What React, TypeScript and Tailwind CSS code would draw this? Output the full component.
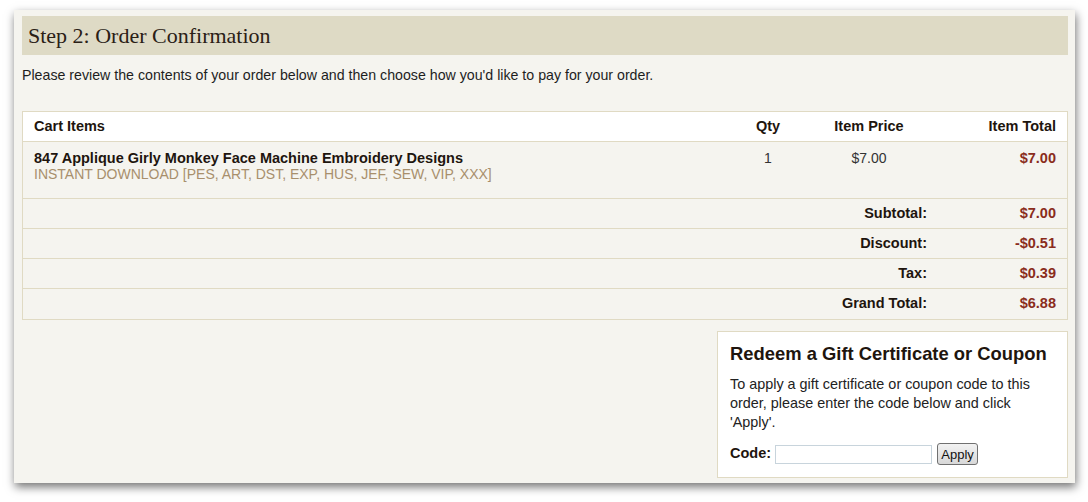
import React from "react";

const rows = [
  { label: "Subtotal:", value: "$7.00" },
  { label: "Discount:", value: "-$0.51" },
  { label: "Tax:", value: "$0.39" },
  { label: "Grand Total:", value: "$6.88" },
];

export default function App() {
  return (
    <div className="w-[1088px] h-[502px] bg-white pl-[14px] pt-[10px] overflow-hidden" style={{ fontFamily: '"Liberation Sans", Arial, sans-serif' }}>
      <div className="w-[1061px] h-[473px] bg-[#f5f4ef] shadow-[1px_4px_9px_rgba(0,0,0,0.55)] pt-[6px] pl-[8px] pr-[7px] text-[14px] text-[#222]">
        <div className="h-[39px] bg-[#dedac5] flex items-center pl-[6px]">
          <h1 className="text-[22px] text-[#2a2016] leading-none pt-[1px]" style={{ fontFamily: '"Liberation Serif", "Times New Roman", serif' }}>
            Step 2: Order Confirmation
          </h1>
        </div>
        <p className="mt-[12px] leading-[16px] text-[14.2px] text-[#1e1e1e]">
          Please review the contents of your order below and then choose how you'd like to pay for your order.
        </p>

        <div className="mt-[28px] border border-[#e0dac3]">
          <div className="h-[30px] bg-white flex items-center font-bold text-[14.5px] text-[#1e150e] border-b border-[#e0dac3]">
            <div className="w-[705px] pl-[11px]">Cart Items</div>
            <div className="w-[80px] text-center">Qty</div>
            <div className="w-[122px] text-center">Item Price</div>
            <div className="flex-1 text-right pr-[11px]">Item Total</div>
          </div>
          <div className="h-[57px] flex items-start pt-[8px] border-b border-[#e0dac3]">
            <div className="w-[705px] pl-[11px]">
              <div className="font-bold text-[14.5px] text-[#1e150e] leading-[16px]">847 Applique Girly Monkey Face Machine Embroidery Designs</div>
              <div className="text-[#a88f6c] leading-[16px]">INSTANT DOWNLOAD [PES, ART, DST, EXP, HUS, JEF, SEW, VIP, XXX]</div>
            </div>
            <div className="w-[80px] text-center leading-[16px] text-[#333]">1</div>
            <div className="w-[122px] text-center leading-[16px] text-[#333]">$7.00</div>
            <div className="flex-1 text-right pr-[11px] font-bold text-[14.5px] text-[#8a2c1c] leading-[16px]">$7.00</div>
          </div>
          {rows.map((r, i) => (
            <div key={r.label} className={`h-[30px] flex items-center font-bold text-[14.5px] ${i < rows.length - 1 ? "border-b border-[#e0dac3]" : ""}`}>
              <div className="w-[904px] text-right text-[#1e150e]">{r.label}</div>
              <div className="flex-1 text-right pr-[11px] text-[#8a2c1c]">{r.value}</div>
            </div>
          ))}
        </div>

        <div className="flex justify-end mt-[11px]">
          <div className="w-[351px] h-[147px] bg-white border border-[#e0dac3] px-[12px] pt-[12px]">
            <h2 className="text-[18.4px] font-bold text-[#1e150e] leading-[20px] whitespace-nowrap">Redeem a Gift Certificate or Coupon</h2>
            <p className="mt-[11px] text-[14.4px] leading-[19px] text-[#222]">
              To apply a gift certificate or coupon code to this
              <br />
              order, please enter the code below and click
              <br />
              'Apply'.
            </p>
            <div className="mt-[11px] flex items-center">
              <span className="font-bold text-[14.5px] text-[#1e150e]">Code:</span>
              <input type="text" className="ml-[4px] w-[157px] h-[19px] border border-[#c8d4dc] bg-white outline-none" />
              <button className="ml-[5px] w-[41px] h-[22px] rounded-[3px] border border-[#707070] bg-gradient-to-b from-[#f2f2f2] to-[#d8d8d8] text-[13px] text-[#111] leading-none">
                Apply
              </button>
            </div>
          </div>
        </div>
      </div>
    </div>
  );
}
